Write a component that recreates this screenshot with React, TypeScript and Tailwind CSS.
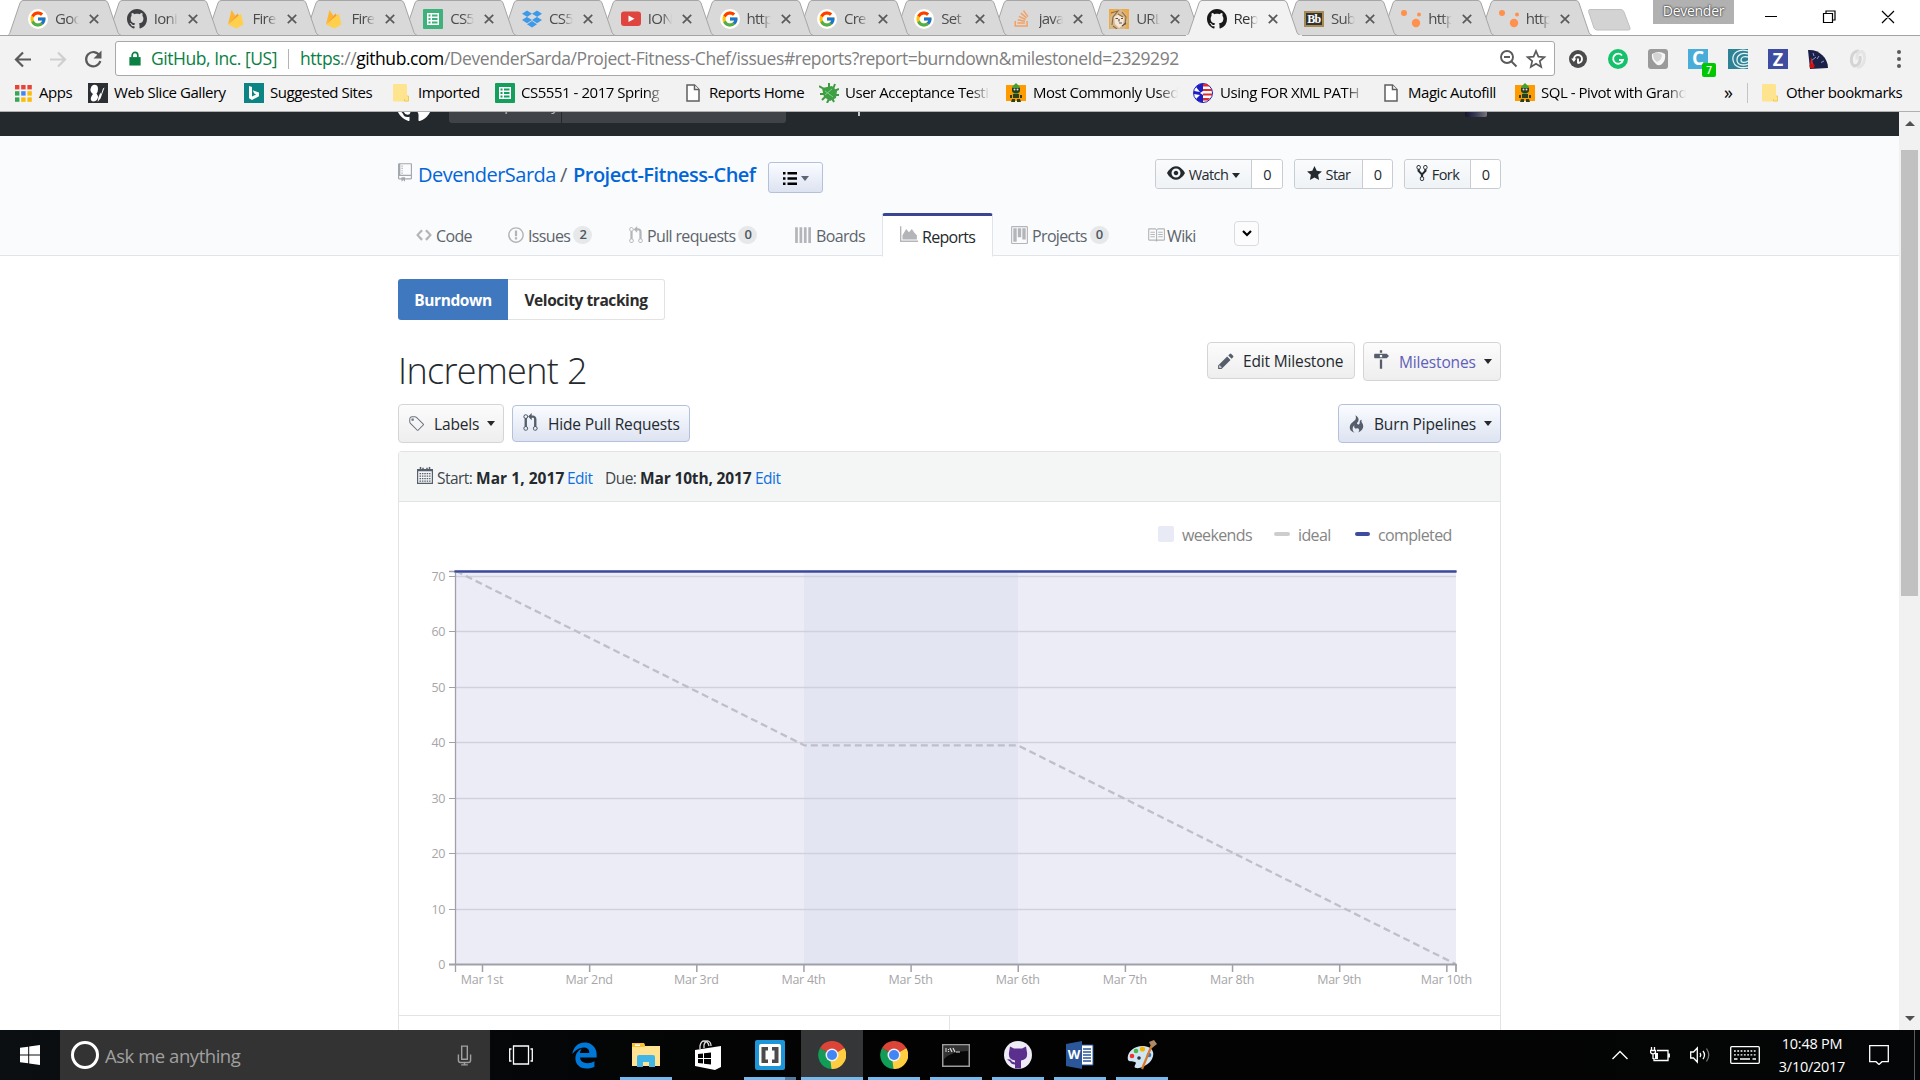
import React from "react";
import { FcGoogle } from "react-icons/fc";
import { FaDropbox, FaStackOverflow, FaEdgeLegacy } from "react-icons/fa";

const P = {
  code: "M9.5 3L8 4.5 11.5 8 8 11.5 9.5 13 14 8 9.5 3zm-5 0L0 8l4.5 5L6 11.5 2.5 8 6 4.5 4.5 3z",
  issue:
    "M7 2.3c3.14 0 5.7 2.56 5.7 5.7s-2.56 5.7-5.7 5.7A5.71 5.71 0 0 1 1.3 8c0-3.14 2.56-5.7 5.7-5.7zM7 1C3.14 1 0 4.14 0 8s3.14 7 7 7 7-3.14 7-7-3.14-7-7-7zm1 3H6v5h2V4zm0 6H6v2h2v-2z",
  pull: "M11 11.28V5c-.03-.78-.34-1.47-.94-2.06C9.46 2.35 8.78 2.03 8 2H7V0L4 3l3 3V4h1c.27.02.48.11.69.31.21.2.3.42.31.69v6.28A1.993 1.993 0 0 0 10 15a1.993 1.993 0 0 0 1-3.72zm-1 2.92c-.66 0-1.2-.55-1.2-1.2 0-.65.55-1.2 1.2-1.2.65 0 1.2.55 1.2 1.2 0 .65-.55 1.2-1.2 1.2zM4 3c0-1.11-.89-2-2-2a1.993 1.993 0 0 0-1 3.72v6.56A1.993 1.993 0 0 0 2 15a1.993 1.993 0 0 0 1-3.72V4.72c.59-.34 1-.98 1-1.72zm-.8 10c0 .66-.55 1.2-1.2 1.2-.65 0-1.2-.55-1.2-1.2 0-.65.55-1.2 1.2-1.2.65 0 1.2.55 1.2 1.2zM2 4.2C1.34 4.2.8 3.65.8 3c0-.65.55-1.2 1.2-1.2.65 0 1.2.55 1.2 1.2 0 .65-.55 1.2-1.2 1.2z",
  repo: "M4 9H3V8h1v1zm0-3H3v1h1V6zm0-2H3v1h1V4zm0-2H3v1h1V2zm8-1v12c0 .55-.45 1-1 1H6v2l-1.5-1.5L3 16v-2H1c-.55 0-1-.45-1-1V1c0-.55.45-1 1-1h10c.55 0 1 .45 1 1zm-1 10H1v2h2v-1h3v1h5v-2zm0-10H2v9h9V1z",
  eye: "M8.06 2C3 2 0 8 0 8s3 6 8.06 6C13 14 16 8 16 8s-3-6-7.94-6zM8 12c-2.2 0-4-1.78-4-4 0-2.2 1.8-4 4-4 2.22 0 4 1.8 4 4 0 2.22-1.78 4-4 4zm2-4c0 1.11-.89 2-2 2-1.11 0-2-.89-2-2 0-1.11.89-2 2-2 1.11 0 2 .89 2 2z",
  star: "M14 6l-4.9-.64L7 1 4.9 5.36 0 6l3.6 3.26L2.67 14 7 11.67 11.33 14l-.93-4.74L14 6z",
  fork: "M8 1a1.993 1.993 0 0 0-1 3.72V6L5 8 3 6V4.72A1.993 1.993 0 0 0 2 1a1.993 1.993 0 0 0-1 3.72V6.5l3 3v1.78A1.993 1.993 0 0 0 5 15a1.993 1.993 0 0 0 1-3.72V9.5l3-3V4.72A1.993 1.993 0 0 0 8 1zM2 4.2C1.34 4.2.8 3.65.8 3c0-.65.55-1.2 1.2-1.2.65 0 1.2.55 1.2 1.2 0 .65-.55 1.2-1.2 1.2zm3 10c-.66 0-1.2-.55-1.2-1.2 0-.65.55-1.2 1.2-1.2.65 0 1.2.55 1.2 1.2 0 .65-.55 1.2-1.2 1.2zm3-10c-.66 0-1.2-.55-1.2-1.2 0-.65.55-1.2 1.2-1.2.65 0 1.2.55 1.2 1.2 0 .65-.55 1.2-1.2 1.2z",
  project:
    "M10 12h3V2h-3v10zm-4-2h3V2H6v8zm-4 4h3V2H2v12zm-1 1h13V1H1v14zM14 0H1a1 1 0 0 0-1 1v14a1 1 0 0 0 1 1h13a1 1 0 0 0 1-1V1a1 1 0 0 0-1-1z",
  book: "M3 5h4v1H3V5zm0 3h4V7H3v1zm0 2h4V9H3v1zm11-5h-4v1h4V5zm0 2h-4v1h4V7zm0 2h-4v1h4V9zm2-6v9c0 .55-.45 1-1 1H9.5l-1 1-1-1H2c-.55 0-1-.45-1-1V3c0-.55.45-1 1-1h5.5l1 1 1-1H15c.55 0 1 .45 1 1zm-8 .5L7.5 3H2v9h6V3.5zm7-.5H9.5l-.5.5V12h6V3z",
  boards: "M0 1h2.4v14H0zM3.9 1h2.4v14H3.9zM7.8 1h2.4v14H7.8zM11.7 1h2.4v14h-2.4z",
  area: "M0 1h1.2v12.8H16V15H0zM2.2 12.8V9L5.5 3.5 8 6.5l2.5-3L13 7l2 2v3.8z",
  mark: "M8 0C3.58 0 0 3.58 0 8c0 3.54 2.29 6.53 5.47 7.59.4.07.55-.17.55-.38 0-.19-.01-.82-.01-1.49-2.01.37-2.53-.49-2.69-.94-.09-.23-.48-.94-.82-1.13-.28-.15-.68-.52-.01-.53.63-.01 1.08.58 1.23.82.72 1.21 1.87.87 2.33.66.07-.52.28-.87.51-1.07-1.78-.2-3.64-.89-3.64-3.95 0-.87.31-1.59.82-2.15-.08-.2-.36-1.02.08-2.12 0 0 .67-.21 2.2.82.64-.18 1.32-.27 2-.27.68 0 1.36.09 2 .27 1.53-1.04 2.2-.82 2.2-.82.44 1.1.16 1.92.08 2.12.51.56.82 1.27.82 2.15 0 3.07-1.87 3.75-3.65 3.95.29.25.54.73.54 1.48 0 1.07-.01 1.93-.01 2.2 0 .21.15.46.55.38A8.013 8.013 0 0 0 16 8c0-4.42-3.58-8-8-8z",
  pencil:
    "M0 12v3h3l8-8-3-3-8 8zm3 2H1v-2h1v1h1v1zm10.3-9.3L12 6 9 3l1.3-1.3a.996.996 0 0 1 1.41 0l1.59 1.59c.39.39.39 1.02 0 1.41z",
  milestone:
    "M8 2H6V0h2v2zm4 5H2c-.55 0-1-.45-1-1V4c0-.55.45-1 1-1h10l2 2-2 2zM8 4H6v2h2V4zM6 16h2V8H6v8z",
  tag: "M7.73 1.73C7.26 1.26 6.62 1 5.96 1H3.5C2.13 1 1 2.13 1 3.5v2.47c0 .66.27 1.3.73 1.77l6.06 6.06c.39.39 1.02.39 1.41 0l4.59-4.59a.996.996 0 0 0 0-1.41L7.73 1.73zM2.38 7.09c-.31-.3-.47-.7-.47-1.13V3.5c0-.88.72-1.59 1.59-1.59h2.47c.42 0 .83.16 1.13.47l6.14 6.13-4.73 4.73-6.13-6.15zM3.01 3h2v2H3V3h.01z",
  flame:
    "M5.05.31c.81 2.17.41 3.38-.52 4.31C3.55 5.67 1.98 6.45.9 7.98c-1.45 2.05-1.7 6.53 3.53 7.7-2.2-1.16-2.67-4.52-.3-6.61-.61 2.03.53 3.33 1.94 2.86 1.39-.47 2.3.53 2.27 1.67-.02.78-.31 1.44-1.13 1.81 3.42-.59 4.78-3.42 4.78-5.56 0-2.84-2.53-3.22-1.25-5.61-1.52.13-2.03 1.13-1.89 2.75.09 1.08-1.02 1.8-1.86 1.33-.67-.41-.66-1.19-.06-1.78C8.18 5.31 8.68 2.45 5.05.32L5.03.3l.02.01z",
};

function Oct({ d, w = 16, className = "" }: { d: string; w?: number; className?: string }) {
  return (
    <svg viewBox={`0 0 ${w} 16`} fill="currentColor" className={`shrink-0 ${className}`}>
      <path fillRule="evenodd" d={d} />
    </svg>
  );
}

/* ---------- Favicons ---------- */

const Google = () => (
  <span className="flex size-5 items-center justify-center rounded-full bg-white">
    <FcGoogle className="size-[18px]" />
  </span>
);
const Firebase = () => (
  <svg viewBox="0 0 20 20" className="size-5">
    <path d="M2 15.500L5.500 1l4 6z" fill="#ffb52e" />
    <path d="M2 15.500L11.500 4.500l2.500 4z" fill="#f9a02c" />
    <path d="M2 15.500L15 4.500l2.500 11-7 4z" fill="#ffd04d" />
  </svg>
);
const Sheets = ({ c }: { c: string }) => (
  <svg viewBox="0 0 20 20" className="size-5">
    <rect width="20" height="20" rx="1" fill={c} />
    <path d="M4 4h12v12H4z" fill="#fff" />
    <path d="M5.500 5.500h2v2h-2zM9 5.500h5.500v2H9zM5.500 9h2v2h-2zM9 9h5.500v2H9zM5.500 12.500h2v2h-2zM9 12.500h5.500v2H9z" fill={c} />
  </svg>
);
const YouTube = () => (
  <svg viewBox="0 0 20 20" className="size-5">
    <rect y="2.500" width="20" height="14.500" rx="3" fill="#e0443e" />
    <path d="M7.500 6.500v6.500l6-3.250z" fill="#fff" />
  </svg>
);
const Portrait = () => (
  <svg viewBox="0 0 20 20" className="size-5">
    <rect width="20" height="20" fill="#edaa4a" />
    <path d="M1 20V8l4-6 6-2 6 4 2 8-3 8z" fill="#d8b98c" />
    <path d="M5 8l5-3 5 4-1 7-4 3-4-4z" fill="#f5e8d8" />
    <path d="M2 4l7-2-5 6-1 8M13 3l4 5-1 8M4 17l4 3M9 5l5 3" fill="none" stroke="#8c6a42" strokeWidth="1.100" />
    <path d="M6.500 9.500H9M12 9.500h2M10 14h3M13 17l4-3M10 10v2.500" stroke="#5c5048" strokeWidth="1.200" />
  </svg>
);
const Blackboard = () => (
  <span className="flex h-4 w-5 items-center justify-center border-2 border-[#a58a52] bg-[#333] font-['Liberation_Serif',serif] text-[12px] font-bold leading-none tracking-tighter text-white">
    Bb
  </span>
);
const Dots = () => (
  <svg viewBox="0 0 20 20" className="size-5">
    <circle cx="3" cy="4" r="3" fill="#ff914d" />
    <circle cx="18" cy="5.500" r="2" fill="#ff914d" />
    <circle cx="15" cy="14" r="4.200" fill="#ff914d" />
  </svg>
);

const tabs: { icon: React.ReactNode; t: string; active?: boolean }[] = [
  { icon: <Google />, t: "Goo" },
  { icon: <Oct d={P.mark} className="size-5 text-[#3f4144]" />, t: "Ioni" },
  { icon: <Firebase />, t: "Fire" },
  { icon: <Firebase />, t: "Fire" },
  { icon: <Sheets c="#3fb27b" />, t: "CS5" },
  { icon: <FaDropbox className="size-5 text-[#3d9ae8]" />, t: "CS5" },
  { icon: <YouTube />, t: "ION" },
  { icon: <Google />, t: "http" },
  { icon: <Google />, t: "Cre" },
  { icon: <Google />, t: "Set" },
  { icon: <FaStackOverflow className="size-[19px] text-[#f3a063]" />, t: "java" },
  { icon: <Portrait />, t: "URL" },
  { icon: <Oct d={P.mark} className="size-5 text-[#191717]" />, t: "Rep", active: true },
  { icon: <Blackboard />, t: "Sub" },
  { icon: <Dots />, t: "http" },
  { icon: <Dots />, t: "http" },
];

const zs = ["z-[16]", "z-[15]", "z-[14]", "z-[13]", "z-[12]", "z-[11]", "z-10", "z-[9]", "z-[8]", "z-[7]", "z-[6]", "z-[5]", "z-[20]", "z-[3]", "z-[2]", "z-[1]"];

function TabStrip() {
  return (
    <div className="relative flex h-9 bg-white pl-[7px]">
      <div className="absolute inset-x-0 bottom-0 h-px bg-[#a3a3a3]" />
      {tabs.map((t, i) => (
        <div key={i} className={`relative h-9 shrink-0 ${i < 7 ? "w-[98.800px]" : "w-[97.400px]"} ${zs[i]}`}>
          <svg viewBox="0 0 116 36" className="absolute top-0 left-0 h-9 w-[116px]">
            <path
              d="M0.500 35.500C2 35 2.500 34 3 32.500L13 3Q14 .5 16 .5H98Q100 .5 101 3L111 32.500Q112 35 114.500 35.500Z"
              fill={t.active ? "#f2f2f2" : "#d9d9d9"}
            />
            <path
              d="M0.500 35.500C2 35 2.500 34 3 32.500L13 3Q14 .5 16 .5H98Q100 .5 101 3L111 32.500Q112 35 114.500 35.500"
              fill="none"
              stroke="#a6a6a6"
            />
            {t.active ? <path d="M0 35.500H116" stroke="#f2f2f2" /> : <path d="M0 35.500H116" stroke="#a3a3a3" />}
          </svg>
          <div className="relative flex h-[37px] items-center pl-[21px]">
            <span className="flex w-5 justify-center">{t.icon}</span>
            <span
              className={`ml-[7px] w-[24px] overflow-hidden whitespace-nowrap text-[15px] tracking-[-0.05em] [mask-image:linear-gradient(to_right,black_60%,transparent)] ${t.active ? "text-[#333]" : "text-[#4c4c4c]"}`}
            >
              {t.t}
            </span>
            <svg viewBox="0 0 10 10" className="ml-[10px] size-[10px]">
              <path d="M.8.8l8.400 8.400M9.200.8L.8 9.200" stroke="#5a5a5a" strokeWidth="1.700" />
            </svg>
          </div>
        </div>
      ))}
      <svg viewBox="0 0 44 22" className="mt-[9px] ml-[13px] h-[22px] w-11">
        <path d="M2 .5H33Q35 .5 36 3L42 19Q42.500 21 40.500 21H9Q7 21 6 19L.5 2.500Q.5.5 2 .5z" fill="#d3d3d3" stroke="#c0c0c0" />
      </svg>
      <div className="ml-auto flex">
        <div className="mr-[31px] flex h-6 w-[81px] items-start justify-center bg-[#b1b1b1] text-[14px] leading-[22px] tracking-[-0.02em] text-white [text-shadow:0_0_2px_#333,0_0_2px_#333]">
          Devender
        </div>
        <svg viewBox="0 0 130 36" className="mr-[25px] h-9 w-[130px]" fill="none" stroke="#000" strokeWidth="1.200">
          <path d="M0 16.500H12M58.500 13.500h9v9h-9zM61 13.500v-2.500h9v9h-2.500M117 11l12 12M129 11l-12 12" />
        </svg>
      </div>
    </div>
  );
}

function Toolbar() {
  return (
    <div className="flex h-10 items-center bg-[#f2f2f2] pt-[5px]">
      <svg viewBox="0 0 115 34" className="h-[34px] w-[115px]" fill="none" strokeWidth="2.200">
        <path d="M31 17.500H16.500M23 10.500l-7 7 7 7" stroke="#5a5a5a" />
        <path d="M50 17.500H64.500M58 10.500l7 7-7 7" stroke="#cfcfcf" />
        <path d="M99.500 13.500a7.200 7.200 0 1 0 .8 5.500" stroke="#5a5a5a" />
        <path d="M101.500 8.500v8h-8z" fill="#5a5a5a" />
      </svg>
      <div className="flex h-[35px] w-[1440px] items-center rounded-[3px] border border-[#a8a8a8] bg-white pl-[13px] text-[17.5px]">
        <svg viewBox="0 0 12 16" className="h-[15px] w-3">
          <path d="M0 6.500h12V15.500H0z" fill="#0b8043" />
          <path d="M3 7V4.500a3 3 0 0 1 6 0V7" fill="none" stroke="#0b8043" strokeWidth="1.800" />
        </svg>
        <span className="ml-[10px] w-[137px] whitespace-nowrap tracking-[-0.026em] text-[#0b8043]">GitHub, Inc. [US]</span>
        <span className="h-5 w-px bg-[#b4b4b4]" />
        <span className="ml-[11px] w-[1190px] whitespace-nowrap tracking-[-0.025em] text-[#808080]">
          <span className="text-[#0b8043]">https</span>://<span className="text-black">github.com</span>
          /DevenderSarda/Project-Fitness-Chef/issues#reports?report=burndown&amp;milestoneId=2329292
        </span>
        <svg viewBox="0 0 50 22" className="ml-[9px] h-[22px] w-[50px] shrink-0" fill="none" stroke="#5a5a5a" strokeWidth="1.900">
          <circle cx="8" cy="9" r="6" />
          <path d="M12.500 13.500l5 5M5 9h6" />
          <path d="M37 3l2.400 5.600 6 .5-4.600 4 1.400 5.900-5.200-3.200-5.200 3.200 1.400-5.900-4.600-4 6-.5z" strokeWidth="1.700" />
        </svg>
      </div>
      <div className="ml-[13px] flex items-center gap-5">
        <svg viewBox="0 0 20 20" className="size-5">
          <circle cx="10" cy="10" r="9" fill="#4b4b4d" />
          <path d="M6 10.500V10a4 4 0 1 1 4 4M10 14.500V9.500" fill="none" stroke="#fff" strokeWidth="1.900" />
          <path d="M3.200 9.500h5.200L5.800 13z" fill="#fff" />
        </svg>
        <svg viewBox="0 0 20 20" className="size-5">
          <circle cx="10" cy="10" r="10" fill="#15c26b" />
          <path d="M14 6.500A5 5 0 1 0 15 11h-4" fill="none" stroke="#fff" strokeWidth="1.800" />
        </svg>
        <svg viewBox="0 0 20 20" className="size-5">
          <rect width="20" height="20" rx="3" fill="#9a9a9a" />
          <path d="M4 5q7-4 13 0 1 6-3 10-4 3-7-1-4-4-3-9z" fill="#f6f6f6" />
          <path d="M5 5q5-3 9 1 0 5-5 7-4-3-4-8z" fill="#d4d4d4" />
        </svg>
        <div className="relative flex size-5 items-center justify-center bg-[#4aacd8] text-[19px] font-bold leading-none text-white">
          C
          <span className="absolute top-[14px] left-[14px] flex h-[14px] w-[14px] items-center justify-center rounded-[2px] bg-[#00c800] text-[10px] font-semibold">
            7
          </span>
        </div>
        <svg viewBox="0 0 20 20" className="size-5">
          <rect width="20" height="20" fill="#2e8296" />
          <path d="M20 2C11-1 4 4 5 11s8 9 15 7M20 5c-6-2-11 1-11 6s6 6 11 4M20 8c-4-1-7 0-7 3s4 3 7 1" fill="none" stroke="#e6f2f4" strokeWidth="1.300" />
        </svg>
        <div className="flex size-5 items-center justify-center bg-[#3f4da0] text-[18px] font-bold leading-none text-white">Z</div>
        <svg viewBox="0 0 20 20" className="size-5">
          <path d="M0 1C10 0 20 8 20 19L2 20z" fill="#1c2046" />
          <path d="M5 4l1 3M11 7l-2 3M16 12l-3 1.500M3 12l5-4" stroke="#8e98d0" />
          <path d="M3 8l3 9-4 2z" fill="#e22" />
          <circle cx="4" cy="17" r="2.500" fill="#c11" />
        </svg>
        <svg viewBox="0 0 20 20" className="size-5" fill="none" strokeWidth="3">
          <path d="M11 2c-9 0-9 12-5 15 5 0 7-5 6-10" stroke="#d4d4d4" />
          <path d="M9 18.500c9-1 9-13 5-16-4 0-6 4-5 8" stroke="#e4e4e4" />
        </svg>
      </div>
      <svg viewBox="0 0 4 18" className="ml-[29px] h-[18px] w-1" fill="#5a5a5a">
        <circle cx="2" cy="2" r="2" />
        <circle cx="2" cy="9" r="2" />
        <circle cx="2" cy="16" r="2" />
      </svg>
    </div>
  );
}

/* ---------- Bookmarks ---------- */

const AppsGrid = () => (
  <svg viewBox="0 0 17 17" className="size-[17px]">
    {["#ea4335", "#ea4335", "#ea4335", "#34a853", "#4285f4", "#fbbc05", "#34a853", "#fbbc05", "#fbbc05"].map((c, i) => (
      <rect key={i} x={(i % 3) * 6.2} y={Math.floor(i / 3) * 6.2} width="4.400" height="4.400" fill={c} />
    ))}
  </svg>
);
const Slice = () => (
  <svg viewBox="0 0 20 20" className="size-5">
    <rect width="20" height="20" fill="#2c2f33" />
    <path d="M5 2q5-1 5 4 0 3-1.500 4.500 1.500 2 1.500 4-1 4-5 4-3-1-2-4 .5-2 2-3.500Q2 9 2.500 6 3 3 5 2zM16.500 4.500l-4 11-3 3.500 1-5 2-4.500.5 2 2-6z" fill="#fff" />
  </svg>
);
const Bing = () => (
  <svg viewBox="0 0 20 20" className="size-5">
    <rect width="20" height="20" fill="#0c8484" />
    <path d="M5 3l3 1v9.500l4-2-2-1.200-1.200-3L15 9.500v3.700L8 17l-3-1.800z" fill="#fff" />
  </svg>
);
const Folder = () => (
  <svg viewBox="0 0 16 18" className="h-[18px] w-4">
    <path d="M1 0h12l1 1v11h1.500v5.500H1Q0 17.500 0 16.500V1Q0 0 1 0z" fill="#ffe48f" />
    <path d="M14 12h1.500v5h-4v-2" fill="none" stroke="#f0cb5a" />
  </svg>
);
const Doc = () => (
  <svg viewBox="0 0 14 18" className="h-[18px] w-[14px]" fill="#fff" stroke="#5f5f5f" strokeWidth="1.500">
    <path d="M1 1h7.500L13 5.500V17H1z" />
    <path d="M8.500 1v4.500H13" />
  </svg>
);
const Bug = () => (
  <svg viewBox="0 0 20 20" className="size-5">
    <path d="M0 3l5 3M10 0v5M16 1l-2 5M20 6l-5 2M20 12h-5M1 11h6M8 20l2-4M15 19l-2-4M3 17l4-4" stroke="#3f9a3f" strokeWidth="2" />
    <path d="M3 5l10-2 5 5-1 7-6 3-6-4z" fill="#3f9f45" />
    <path d="M6 8l8 6M6 12l7-6" stroke="#7dd07d" />
  </svg>
);
const Alien = () => (
  <svg viewBox="0 0 20 20" className="size-5">
    <rect y="2" width="20" height="16" fill="#ff9a00" />
    <path d="M10 0l4 4v5l-4 3-4-3V4z" fill="#46a02c" />
    <path d="M6 5h8v3l-2 2H8L6 8z" fill="#2b3b24" />
    <circle cx="8.500" cy="6.500" r="1" fill="#ddd" />
    <circle cx="11.500" cy="6.500" r="1" fill="#ddd" />
    <path d="M7 11h6v4H7zM6 16h3v3H5zM11 16h3l1 3h-4zM4 12h2v3H4zM14 12h2v3h-2z" fill="#28401c" />
  </svg>
);
const Flag = () => (
  <svg viewBox="0 0 20 20" className="size-5">
    <circle cx="10" cy="10" r="9.500" fill="#fff" stroke="#1b1fc4" />
    <path d="M10 1h4l3 2.500H10zM10 6h9v2h-9zM10 10.500h9v2h-9zM10 15h7l-2 2.500h-5z" fill="#e02b2b" />
    <path d="M3 4a9 9 0 0 1 7-3.500V8L7 10l3 2v7.500A9 9 0 0 1 3 16l4-4-6-1V8l6 1z" fill="#1b1fc4" />
  </svg>
);

const bookmarks: { icon: React.ReactNode; iw: string; t: string; w: string; fade?: boolean }[] = [
  { icon: <AppsGrid />, iw: "w-[24px]", t: "Apps", w: "w-[49px]" },
  { icon: <Slice />, iw: "w-[26px]", t: "Web Slice Gallery", w: "w-[130px]" },
  { icon: <Bing />, iw: "w-[26px]", t: "Suggested Sites", w: "w-[123px]" },
  { icon: <Folder />, iw: "w-[25px]", t: "Imported", w: "w-[77px]" },
  { icon: <Sheets c="#159f5c" />, iw: "w-[26px]", t: "CS5551 - 2017 Spring", w: "w-[165px]", fade: true },
  { icon: <Doc />, iw: "w-[23px]", t: "Reports Home", w: "w-[110px]" },
  { icon: <Bug />, iw: "w-[26px]", t: "User Acceptance Testin", w: "w-[161px]", fade: true },
  { icon: <Alien />, iw: "w-[27px]", t: "Most Commonly Used", w: "w-[160px]", fade: true },
  { icon: <Flag />, iw: "w-[27px]", t: "Using FOR XML PATH", w: "w-[164px]", fade: true },
  { icon: <Doc />, iw: "w-[24px]", t: "Magic Autofill", w: "w-[107px]" },
  { icon: <Alien />, iw: "w-[26px]", t: "SQL - Pivot with Grand", w: "w-[183px]", fade: true },
];

function Bookmarks() {
  return (
    <div className="flex h-9 items-center border-b border-[#b0b0b0] bg-[#f2f2f2] pb-px pl-[15px] text-[15px] tracking-[-0.031em] text-black">
      {bookmarks.map((b, i) => (
        <React.Fragment key={i}>
          <span className={`flex shrink-0 ${b.iw}`}>{b.icon}</span>
          <span className={`-mt-px shrink-0 ${b.w}`}>
            {b.fade ? (
              <span className="block max-w-[145px] overflow-hidden whitespace-nowrap [mask-image:linear-gradient(to_right,black_86%,transparent)]">{b.t}</span>
            ) : (
              <span className="whitespace-nowrap">{b.t}</span>
            )}
          </span>
        </React.Fragment>
      ))}
      <span className="w-[23px] shrink-0 -translate-y-px text-[18px]">»</span>
      <span className="h-5 w-px bg-[#c4c4c4]" />
      <span className="ml-[14px] flex w-[24px] shrink-0">
        <Folder />
      </span>
      <span className="-mt-px whitespace-nowrap">Other bookmarks</span>
    </div>
  );
}

/* ---------- Page ---------- */

const Caret = ({ className = "" }: { className?: string }) => (
  <span className={`inline-block border-x-[4.5px] border-t-[5px] border-x-transparent border-t-current ${className}`} />
);

function SocialButton({ icon, label, caret, l, r }: { icon: React.ReactNode; label: string; caret?: boolean; l: string; r: string }) {
  return (
    <div className="flex h-[30px] rounded-[3px] border border-[#c9cdd1] text-[14.500px] font-medium tracking-[-0.04em] text-[#24292e]">
      <div className={`flex items-center justify-center gap-1 rounded-l-[3px] bg-gradient-to-b from-[#fafbfc] to-[#eff3f6] whitespace-nowrap ${l}`}>
        {icon}
        <span className="pt-0.5">{label}</span>
        {caret && <Caret className="mt-0.5" />}
      </div>
      <div className={`flex items-center justify-center rounded-r-[3px] border-l border-[#c9cdd1] bg-white pt-px ${r}`}>0</div>
    </div>
  );
}

const Badge = ({ n }: { n: string }) => (
  <span className="mb-0.5 ml-[3px] flex h-[18px] w-[19px] items-center justify-center rounded-full bg-[#e6e8ea] text-[13px] font-semibold text-[#4f565e]">{n}</span>
);

function NavTab({ icon, iw, label, w, badge }: { icon: React.ReactNode; iw: string; label: string; w: string; badge?: string }) {
  return (
    <div className={`flex shrink-0 items-center whitespace-nowrap pt-0.5 text-[16px] tracking-[-0.04em] text-[#5d646c] ${w}`}>
      <span className={`mb-0.5 flex shrink-0 text-[#b3b5b8] ${iw}`}>{icon}</span>
      {label}
      {badge && <Badge n={badge} />}
    </div>
  );
}

const btn = "flex items-center rounded-[4px] border whitespace-nowrap text-[15.500px] font-medium tracking-[-0.01em] text-[#24292e]";
const grey = "border-[#d5d5d5] bg-gradient-to-b from-[#fcfcfc] to-[#eee]";
const blue = "border-[#b5c1da] bg-gradient-to-b from-[#fafcff] to-[#dde3f1]";

function RepoHead() {
  return (
    <div className="h-[120px] border-b border-[#e1e4e8] bg-[#fafbfc]">
      <div className="ml-[398px] flex w-[1103px] flex-col">
        <div className="flex h-[77px] items-start">
          <Oct d={P.repo} w={12} className="mt-[27px] h-[19px] w-[14px] text-[#a3a8ae]" />
          <div className="mt-[23px] ml-[6px] flex w-[350px] text-[20px] leading-[32px] whitespace-nowrap text-[#0366d6]">
            <span className="w-[142px] tracking-[-0.025em]">DevenderSarda</span>
            <span className="w-[13px] text-[#586069]">/</span>
            <span className="font-semibold tracking-[-0.026em]">Project-Fitness-Chef</span>
          </div>
          <div className={`mt-[26px] flex h-[31px] w-[55px] items-center justify-center gap-1 rounded-[3px] border ${blue}`}>
            <svg viewBox="0 0 14 15" className="mt-0.5 h-[15px] w-[14px]">
              <path d="M0 1h2.500v2.500H0zM4.500 1H14v2.500H4.500zM0 6.200h2.500v2.500H0zM4.500 6.200H14v2.500H4.500zM0 11.400h2.500v2.500H0zM4.500 11.400H14v2.500H4.500z" />
            </svg>
            <Caret className="mt-0.5 text-[#5b6575]" />
          </div>
          <div className="mt-[23px] ml-auto flex gap-[11px]">
            <SocialButton icon={<Oct d={P.eye} className="mb-0.5 size-[18px]" />} label="Watch" caret l="w-[95px]" r="w-[31px]" />
            <SocialButton icon={<Oct d={P.star} w={14} className="mb-0.5 h-[17px] w-[15px]" />} label="Star" l="w-[67px]" r="w-[30px]" />
            <SocialButton icon={<Oct d={P.fork} w={10} className="mb-0.5 h-[18px] w-[12px]" />} label="Fork" l="w-[65px]" r="w-[30px]" />
          </div>
        </div>
        <div className="flex h-[43px] items-center pl-[18px]">
          <NavTab icon={<Oct d={P.code} w={14} className="h-[18px] w-4" />} iw="w-5" label="Code" w="w-[92px]" />
          <NavTab icon={<Oct d={P.issue} w={14} className="h-[18px] w-4" />} iw="w-[20px]" label="Issues" w="w-[121px]" badge="2" />
          <NavTab icon={<Oct d={P.pull} w={12} className="h-[18px] w-[14px]" />} iw="w-[18px]" label="Pull requests" w="w-[166px]" badge="0" />
          <NavTab icon={<Oct d={P.boards} w={14} className="h-[18px] w-4" />} iw="w-[21px]" label="Boards" w="w-[87px]" />
          <div className="flex h-[44px] w-[111px] items-center self-start rounded-t-[3px] border border-t-[3px] border-[#e1e4e8] border-t-[#3b4593] border-b-white bg-white pl-[17px] text-[16px] tracking-[-0.045em] text-[#24292e]">
            <span className="w-[22px] text-[#b3b5b8]">
              <Oct d={P.area} className="mb-1 size-[18px]" />
            </span>
            <span className="pt-px">Reports</span>
          </div>
          <NavTab icon={<Oct d={P.project} w={15} className="h-[18px] w-[17px]" />} iw="w-[21px] ml-[18px]" label="Projects" w="w-[154px]" badge="0" />
          <NavTab icon={<Oct d={P.book} className="size-[18px]" />} iw="w-[20px]" label="Wiki" w="w-[87px]" />
          <div className="mb-0.5 flex h-[25px] w-[25px] items-center justify-center rounded-[4px] border border-[#d9dcdf] bg-[#fcfcfd]">
            <svg viewBox="0 0 10 7" className="h-[7px] w-[10px]">
              <path d="M1 1l4 4 4-4" fill="none" stroke="#000" strokeWidth="2.200" />
            </svg>
          </div>
        </div>
      </div>
    </div>
  );
}

const yTicks = [0, 10, 20, 30, 40, 50, 60, 70];
const xTicks = ["Mar 1st", "Mar 2nd", "Mar 3rd", "Mar 4th", "Mar 5th", "Mar 6th", "Mar 7th", "Mar 8th", "Mar 9th", "Mar 10th"];

function Chart() {
  // Coordinates are relative to the panel's inner left edge and the row under the legend.
  const y = (v: number) => 404.5 - v * 5.546;
  const line = (v: number) => Math.floor(y(v)) + 0.5;
  const x = (i: number) => 83 + i * 107.15;
  return (
    <svg viewBox="0 0 1101 455" className="h-[455px] w-[1101px] shrink-0 font-['Open_Sans',sans-serif]">
      <rect x="57" y="11" width="1000" height="393" fill="#ececf6" />
      <rect x="405" y="11" width="214" height="393" fill="#e3e5f2" />
      {yTicks.slice(1).map((v) => (
        <path key={v} d={`M57 ${line(v)}H1057`} stroke="#d0d1de" strokeWidth="1.300" />
      ))}
      <path d={`M57 11L405.500 ${y(39.5)}H619L1056.500 404`} fill="none" stroke="#bfbfca" strokeWidth="2.300" strokeDasharray="7 4" />
      <path d="M50 11.500H56.500V412" fill="none" stroke="#a0a0a8" strokeWidth="1.300" />
      <path d="M50 404.500H1057.500" stroke="#a0a0a8" strokeWidth="2" />
      <path d="M1057 404V412" stroke="#a0a0a8" strokeWidth="1.800" />
      {yTicks.map((v) => (
        <g key={v}>
          <path d={`M50 ${line(v)}h6`} stroke="#a0a0a8" />
          <text x="46" y={y(v) + 4.5} textAnchor="end" fontSize="12.500" letterSpacing="-0.4" fill="#a6a6a8">
            {v}
          </text>
        </g>
      ))}
      {xTicks.map((t, i) => (
        <g key={t}>
          <path d={`M${x(i) + 0.5} 405v7`} stroke="#a0a0a8" strokeWidth="1.500" />
          <text x={x(i)} y="424" textAnchor="middle" fontSize="12.500" letterSpacing="-0.25" fill="#a6a6a8">
            {t}
          </text>
        </g>
      ))}
      <path d="M55.500 11.500H1057.500" stroke="#7680ba" strokeWidth="3" />
      <path d="M55.500 11.500H1057.500" stroke="#3b4898" strokeWidth="1.300" />
    </svg>
  );
}

const Calendar = () => (
  <svg viewBox="0 0 16 17" className="h-[17px] w-4" fill="none" stroke="#565f6b">
    <path d="M.6 2.600h14.800v13.800H.6zM.6 3.600h14.800" strokeWidth="1.200" />
    <path d="M3.500 0v4M12.500 0v4M6 .8v2M10 .8v2" strokeWidth="1.500" />
    <path d="M2.500 6.700h11M2.500 9.200h11M2.500 11.700h11M2.500 14.200h11" strokeWidth="1.300" strokeDasharray="1.500 .9" />
  </svg>
);

function Report() {
  return (
    <div className="ml-[398px] flex w-[1103px] flex-col">
      <div className="mt-[23px] flex h-[41px] text-[15.500px] font-bold tracking-[-0.027em]">
        <div className="flex w-[110px] items-center justify-center rounded-l-[3px] bg-[#4078c0] pt-0.5 text-white">Burndown</div>
        <div className="flex w-[157px] items-center justify-center rounded-r-[3px] border border-l-0 border-[#e2e2e2] pt-0.5 text-[#2c2c2c]">Velocity tracking</div>
      </div>
      <div className="flex h-[84px] items-start justify-between">
        <h1 className="mt-[25px] text-[36px] leading-[52px] font-[350] tracking-[-0.018em] text-[#24292e]">Increment 2</h1>
        <div className="mt-[22px] flex items-start gap-2">
          <div className={`${btn} ${grey} h-[37px] w-[148px] pl-[10px]`}>
            <Oct d={P.pencil} w={14} className="mr-[9px] h-[18px] w-4 text-[#555e6a]" />
            <span className="pt-0.5">Edit Milestone</span>
          </div>
          <div className={`${btn} ${grey} h-[39px] w-[138px] pl-[9px]`}>
            <Oct d={P.milestone} w={14} className="mr-[10px] mb-1 h-[19px] w-4 text-[#555e6a]" />
            <span className="w-[85px] pt-0.5 text-[#5e60ba]">Milestones</span>
            <Caret />
          </div>
        </div>
      </div>
      <div className="flex h-[47px] items-start">
        <div className={`${btn} ${grey} h-[39px] w-[106px] pl-[9px]`}>
          <Oct d={P.tag} w={14} className="mr-[10px] h-[18px] w-4 text-[#6a7380]" />
          <span className="w-[53px] pt-0.5">Labels</span>
          <Caret />
        </div>
        <div className={`${btn} ${blue} mt-px ml-2 h-[37px] w-[178px] pl-[10px]`}>
          <Oct d={P.pull} w={12} className="mr-[10px] mb-0.5 h-[19px] w-[15px] text-[#555e6a]" />
          <span className="pt-0.5">Hide Pull Requests</span>
        </div>
        <div className={`${btn} ${blue} ml-auto h-[39px] w-[163px] pl-[10px]`}>
          <Oct d={P.flame} w={12} className="mr-[10px] h-[18px] w-[15px] text-[#555e6a]" />
          <span className="w-[110px] pt-0.5">Burn Pipelines</span>
          <Caret />
        </div>
      </div>
      <div className="flex h-[580px] shrink-0 flex-col rounded-t-[4px] border border-b-0 border-[#e2e4e4]">
        <div className="flex h-[50px] shrink-0 items-center border-b border-[#e2e4e4] bg-[#f4f6f5] pt-[4px] pl-[18px] text-[15.500px] whitespace-nowrap tracking-[-0.035em] text-[#3f454c]">
          <span className="mb-1.5 flex w-[20px]">
            <Calendar />
          </span>
          <span className="w-[39px]">Start:</span>
          <b className="w-[91px] tracking-[0.003em] text-[#24292e]">Mar 1, 2017</b>
          <span className="w-[38px] text-[#1070e0]">Edit</span>
          <span className="w-[35px]">Due:</span>
          <b className="w-[115px] tracking-[-0.01em] text-[#24292e]">Mar 10th, 2017</b>
          <span className="text-[#1070e0]">Edit</span>
        </div>
        <div className="flex h-[58px] shrink-0 items-center pb-[3px] pl-[759px] text-[16px] whitespace-nowrap tracking-[-0.04em] text-[#858585]">
          <span className="mt-2 mr-2 size-4 rounded-[2px] bg-[#e8eaf6]" />
          <span className="mt-2.5 w-[92px]">weekends</span>
          <span className="mt-2 mr-2 h-1 w-4 rounded-full bg-[#cdcdcd]" />
          <span className="mt-2.5 w-[57px]">ideal</span>
          <span className="mt-2 mr-[8px] h-1 w-[15px] rounded-full bg-[#3f4c9d]" />
          <span className="mt-2.5">completed</span>
        </div>
        <Chart />
        <div className="flex h-4 border-t border-[#e2e4e4]">
          <div className="w-[551px] border-r border-[#e2e4e4]" />
        </div>
      </div>
    </div>
  );
}

function Page() {
  return (
    <div className="flex h-[918px] overflow-hidden bg-white">
      <div className="flex w-[1899px] flex-col">
        <div className="flex h-6 shrink-0 items-start overflow-hidden bg-[#24292e] pl-[396px]">
          <Oct d={P.mark} className="-mt-[26px] size-9 text-white" />
          <div className="ml-[17px] flex h-[11px] w-[337px] overflow-hidden rounded-b-[3px] bg-[#404448] text-[15px] text-[#b5b8bb]">
            <span className="w-[113px] border-r border-[#24292e] pl-[11px]">
              <span className="-mt-[19px] block leading-[22px] whitespace-nowrap tracking-tight">This repository</span>
            </span>
          </div>
          <span className="ml-[72px] h-1 w-[2px] bg-[#c6c8ca]" />
          <span className="ml-[605px] h-[5px] w-[22px] rounded-b-[2px] bg-gradient-to-r from-[#15132e] via-[#3a3b54] to-[#77767b]" />
        </div>
        <RepoHead />
        <Report />
      </div>
      <div className="flex w-[21px] flex-col items-center justify-between bg-[#f1f1f1] py-[9px]">
        <span className="border-x-[5px] border-b-[5px] border-x-transparent border-b-[#505050]" />
        <span className="mt-[24px] mb-auto h-[446px] w-[17px] bg-[#c1c1c1]" />
        <span className="border-x-[5px] border-t-[5px] border-x-transparent border-t-[#505050]" />
      </div>
    </div>
  );
}

/* ---------- Taskbar ---------- */

const Chrome = () => (
  <svg viewBox="0 0 28 28" className="size-[28px]">
    <path d="M14 14L2 7A14 14 0 0 1 26.300 7z" fill="#db4437" />
    <path d="M14 14L26.300 7A14 14 0 0 1 13.500 28z" fill="#ffcd40" />
    <path d="M14 14l-.5 14A14 14 0 0 1 2 7z" fill="#0f9d58" />
    <path d="M14 7h12.300L14 14zM8 17.500L2 7l7 5z" fill="#db4437" />
    <path d="M20 17.500L13.500 28l-1-8z" fill="#ffcd40" />
    <path d="M8 17.500L2 7l7 5z" fill="#0f9d58" />
    <circle cx="14" cy="14" r="6.500" fill="#f1f1f1" />
    <circle cx="14" cy="14" r="5" fill="#4285f4" />
  </svg>
);

const apps: { icon: React.ReactNode; bar?: "full" | "split" | "plain"; active?: boolean }[] = [
  { icon: <FaEdgeLegacy className="size-[27px] text-[#0078d7]" /> },
  {
    bar: "plain",
    icon: (
      <svg viewBox="0 0 28 24" className="h-6 w-7">
        <path d="M0 0h12l1 3h15v20H0z" fill="#ffe392" />
        <path d="M0 0h12l1 4H0z" fill="#fbc02d" />
        <path d="M3 1.500h5v1.500H3z" fill="#fff" />
        <path d="M5 24V14q0-2 2-2h14q2 0 2 2v10h-6v-5h-6v5z" fill="#3fb5e8" />
      </svg>
    ),
  },
  {
    icon: (
      <svg viewBox="0 0 26 30" className="h-[30px] w-[26px]">
        <path d="M0 10l26-4v21l-6 3-20-4z" fill="#fff" />
        <path d="M5 9V6q1-5 4-5 4 0 5 5M9 8V5q1-4 4-4 3 1 3 5" fill="none" stroke="#ddd" strokeWidth="1.300" />
        <path d="M3 14l5-.6v4.600H3zM9 13.300l7-.8V18H9zM3 19h5v4.600L3 23zM9 19h7v5.500l-7-.8z" fill="#000" />
      </svg>
    ),
  },
  {
    bar: "split",
    icon: (
      <svg viewBox="0 0 30 30" className="size-[30px]">
        <rect width="30" height="30" rx="2" fill="#1c96d8" />
        <rect x="4" y="4" width="22" height="22" rx="2" fill="#fff" />
        <path d="M6.500 7H13v3.500h-2.500v9H13V23H6.500zM23.500 7H17v3.500h2.500v9H17V23h6.500z" fill="#4b4b4b" />
      </svg>
    ),
  },
  { bar: "full", active: true, icon: <Chrome /> },
  { bar: "plain", icon: <Chrome /> },
  {
    bar: "plain",
    icon: (
      <svg viewBox="0 0 28 23" className="h-[23px] w-7">
        <rect x=".75" y=".75" width="26.500" height="21.500" fill="#070707" stroke="#9c9c9c" strokeWidth="1.500" />
        <path d="M2 2h24v5Q10 7 2 15z" fill="#333" />
        <path d="M3 5h2M3 7h2M6.500 5v1M6.500 7v1M8 4l2 4M11 4l2 4M14 8h4" stroke="#ddd" strokeWidth="1.200" />
      </svg>
    ),
  },
  {
    bar: "plain",
    icon: (
      <svg viewBox="0 0 28 28" className="size-7">
        <circle cx="14" cy="14" r="14" fill="#ecebf6" />
        <path d="M6 5.500l4 2h8l4-2 1 6q1 7-6 8v8h-6v-4q-4 0-5-3l-3-2q4-1 5 2l3 1v-2q-7-1-6-8z" fill="#5b2f8e" />
      </svg>
    ),
  },
  {
    bar: "plain",
    icon: (
      <div className="relative flex h-7 w-7 items-center">
        <svg viewBox="0 0 28 28" className="absolute inset-0 size-7">
          <path d="M15 4h12v20H15z" fill="#fff" stroke="#2b579a" />
          <path d="M17 8h8M17 11h8M17 14h8M17 17h8M17 20h8" stroke="#2b579a" strokeWidth="1.500" />
          <path d="M0 3L16 0v28L0 25z" fill="#2b579a" />
        </svg>
        <span className="relative w-4 text-center text-[13px] font-bold text-white">W</span>
      </div>
    ),
  },
  {
    bar: "plain",
    icon: (
      <svg viewBox="0 0 30 30" className="size-[30px]">
        <path d="M1 20C-1 12 8 5 17 6c9 1 11 7 8 13s-12 10-16 9 2-5-1-6-6 0-7-2z" fill="#cfe5f2" />
        <circle cx="5" cy="16" r="2.300" fill="#e33" />
        <circle cx="9" cy="11" r="2.300" fill="#4b4" />
        <circle cx="15.500" cy="9" r="2.600" fill="#f4b400" />
        <circle cx="22" cy="15" r="2.300" fill="#37c" />
        <circle cx="12" cy="18" r="1.800" fill="#234" />
        <path d="M24.500 6L15 29" stroke="#d9772b" strokeWidth="2.200" />
        <path d="M22 2l5-2 3 4-5 4z" fill="#b08a63" />
      </svg>
    ),
  },
];

function Taskbar() {
  return (
    <div className="flex h-[50px] bg-gradient-to-r from-[#0b0f12] via-[#020202] to-[#050607]">
      <div className="flex w-[60px] items-center justify-center">
        <svg viewBox="0 0 20 20" className="size-5" fill="#fff">
          <path d="M0 2.800l8.200-1.100v7.800H0zM9.200 1.500L20 0v9.500H9.200zM0 10.500h8.200v7.800L0 17.200zM9.200 10.500H20V20L9.200 18.500z" />
        </svg>
      </div>
      <div className="flex w-[430px] items-center bg-[#333]">
        <span className="ml-[11px] size-7 rounded-full border-[3.5px] border-white" />
        <span className="ml-[6px] pt-0.5 text-[18.500px] tracking-[-0.025em] text-[#a0a0a0]">Ask me anything</span>
        <svg viewBox="0 0 16 22" className="mr-[18px] ml-auto h-[21px] w-[15px]" fill="none" stroke="#a0a0a0" strokeWidth="1.500">
          <path d="M5 1h6v14H5zM1.500 10v6q0 2.500 2.500 2.500h8q2.500 0 2.500-2.500v-6M8 18v3M4.500 21h7" />
        </svg>
      </div>
      <div className="flex w-[63px] items-center justify-center">
        <svg viewBox="0 0 24 20" className="mr-0.5 h-5 w-6" fill="none" stroke="#fff" strokeWidth="1.300">
          <path d="M4.500 1h15v18h-15zM2.500 4H.7v12h1.800M21.500 4h1.800v12h-1.800" />
        </svg>
      </div>
      {apps.map((a, i) => (
        <div key={i} className={`relative flex h-[50px] w-[62px] shrink-0 items-center justify-center ${a.active ? "bg-[#353637]" : ""}`}>
          {a.icon}
          {a.bar === "full" && <span className="absolute inset-x-0 bottom-0 h-[3px] bg-[#76b9ed]" />}
          {a.bar === "plain" && <span className="absolute inset-x-[5px] bottom-0 h-[3px] bg-[#76b9ed]" />}
          {a.bar === "split" && (
            <span className="absolute inset-x-[5px] bottom-0 flex h-[3px] bg-[#76b9ed]">
              <span className="ml-auto w-[11px] bg-[#4f7ca0]" />
            </span>
          )}
        </div>
      ))}
      <div className="ml-auto flex items-center text-white">
        <svg viewBox="0 0 16 10" className="mr-[22px] h-[10px] w-4" fill="none" stroke="#fff" strokeWidth="1.400">
          <path d="M.5 9L8 1.500 15.500 9" />
        </svg>
        <svg viewBox="0 0 20 16" className="mr-5 h-4 w-5" fill="none" stroke="#fff" strokeWidth="1.300">
          <path d="M7 3.500h11v10H4V11M19.300 6.500v4M1.500 0v3M4.500 0v3M.5 3.500h5v2q-2.500 3-5 0zM3 7v5" />
          <path d="M5 6h3v6H5z" fill="#fff" stroke="none" />
        </svg>
        <svg viewBox="0 0 20 18" className="mr-5 h-[18px] w-5" fill="none" stroke="#fff" strokeWidth="1.300">
          <path d="M.7 6h2.800L7.300 2v14L3.500 12H.7zM10 7q1.500 2 0 4M13 5q3 4 0 8" />
          <path d="M16.500 2.500q4.500 6.500 0 13" stroke="#777" />
        </svg>
        <svg viewBox="0 0 30 18" className="mr-[17px] h-[18px] w-[30px]" fill="none" stroke="#fff" strokeWidth="1.300">
          <rect x=".7" y=".7" width="28.600" height="16.600" rx="1" />
          <path d="M4 5h22M4 8.800h22" strokeDasharray="1.800 1.500" />
          <path d="M4 13h3.500M10 13h10M22.500 13H26" />
        </svg>
        <div className="flex w-[70px] flex-col items-center text-[14.500px] leading-[23px] tracking-[-0.018em] whitespace-nowrap">
          <span>10:48 PM</span>
          <span>3/10/2017</span>
        </div>
        <svg viewBox="0 0 20 20" className="mr-[25px] ml-[22px] h-5 w-5" fill="none" stroke="#fff" strokeWidth="1.300">
          <path d="M.7.7h18.600v16H13l-3 2.800-3-2.800H.7z" />
        </svg>
        <span className="mr-[5px] h-[50px] w-px bg-[#5a5a5a]" />
      </div>
    </div>
  );
}

export default function App() {
  return (
    <div className="flex h-[1080px] w-[1920px] flex-col overflow-hidden bg-white font-['Open_Sans','Noto_Sans',sans-serif]">
      <TabStrip />
      <Toolbar />
      <Bookmarks />
      <Page />
      <Taskbar />
    </div>
  );
}
